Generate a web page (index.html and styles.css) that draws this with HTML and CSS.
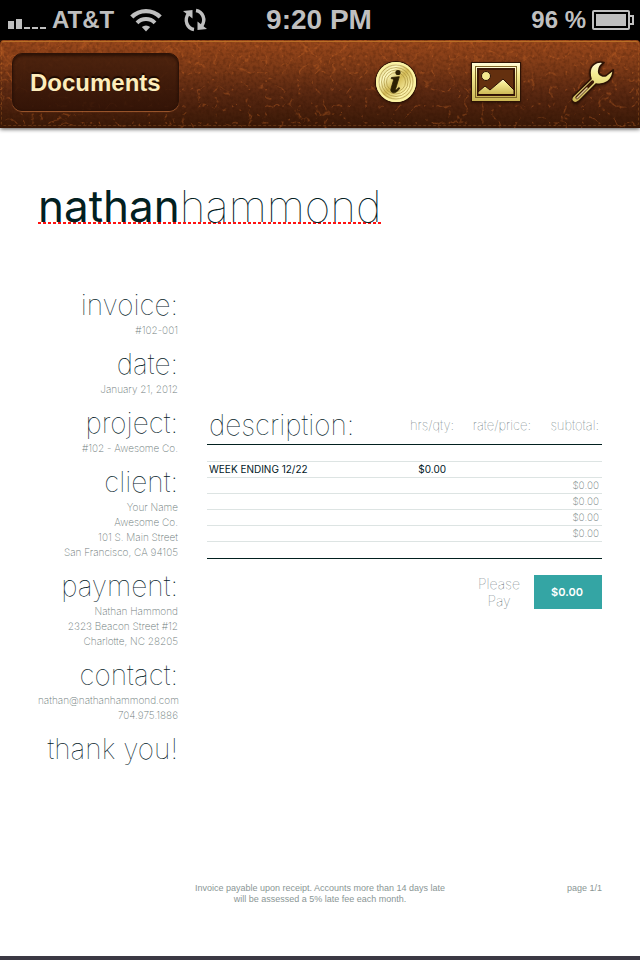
FILE: index.html
```html
<!DOCTYPE html>
<html lang="en">
<head>
<meta charset="utf-8">
<meta name="viewport" content="width=device-width, initial-scale=1">
<title>Invoice #102-001</title>
<link rel="stylesheet" href="styles.css">
</head>
<body>
<div class="status">
  <div class="status-side">
    <svg class="signal" width="40" height="12" viewBox="0 0 40 12" fill="currentColor" aria-hidden="true">
      <path d="M0 3h6v8H0zM8 1h6v10H8zM16 9h6v2h-6zM24 9h6v2h-6zM32 9h6v2h-6z"/>
    </svg>
    <span class="carrier">AT&amp;T</span>
    <svg class="wifi" width="32" height="24" viewBox="0 0 32 24" fill="none" stroke="currentColor" stroke-width="4.400" aria-hidden="true">
      <path d="M1.800 9a20 20 0 0 1 28.400 0"/>
      <path d="M7 14.800a12.700 12.700 0 0 1 18 0" stroke-width="4"/>
      <path d="M16 23.500l-4.200-4.400a6 6 0 0 1 8.400 0z" fill="currentColor" stroke="none"/>
    </svg>
    <svg class="sync" width="26" height="24" viewBox="0 0 26 24" fill="none" stroke="currentColor" stroke-width="3.400" aria-hidden="true">
      <path d="M12 21.500C5.500 20.500 1.500 12.500 6.500 5.500"/>
      <path d="M14 2.500C20.500 3.500 24.500 11.500 19.500 18.500"/>
      <path d="M1 3l9.500-1v8.500z" fill="currentColor" stroke="none"/>
      <path d="M25 21l-9.500 1v-8.500z" fill="currentColor" stroke="none"/>
    </svg>
  </div>
  <div class="clock">9:20 PM</div>
  <div class="status-side status-end">
    <span class="percent">96 %</span>
    <svg class="battery" width="42" height="20" viewBox="0 0 42 20" aria-hidden="true">
      <rect x="1" y="1" width="36" height="18" rx="1" fill="none" stroke="currentColor" stroke-width="2"/>
      <rect x="4" y="4" width="30" height="12" fill="currentColor"/>
      <path d="M38 6h3v8h-3" fill="none" stroke="currentColor" stroke-width="2"/>
    </svg>
  </div>
</div>

<header class="toolbar">
  <svg class="leather" width="100%" height="100%" aria-hidden="true">
    <filter id="veins" x="0" y="0" width="100%" height="100%" color-interpolation-filters="sRGB">
      <feTurbulence type="turbulence" baseFrequency="0.06" numOctaves="3" seed="8"/>
      <feColorMatrix values="0 0 0 0 0.82  0 0 0 0 0.42  0 0 0 0 0.16  -9 0 0 0 1.300"/>
    </filter>
    <filter id="pores" x="0" y="0" width="100%" height="100%" color-interpolation-filters="sRGB">
      <feTurbulence type="fractalNoise" baseFrequency="0.3" numOctaves="2" seed="3"/>
      <feColorMatrix values="0 0 0 0 0.16  0 0 0 0 0.05  0 0 0 0 0  3 0 0 0 -1.200"/>
    </filter>
    <rect width="100%" height="100%" filter="url(#pores)" opacity=".2"/>
    <rect width="100%" height="100%" filter="url(#veins)" opacity=".35"/>
  </svg>
  <button class="back" type="button">Documents</button>
  <div class="tools">
    <button class="tool" type="button" aria-label="Information">
      <svg width="48" height="48" viewBox="0 0 48 48" aria-hidden="true">
        <defs>
          <linearGradient id="gold" x1="0" y1="0" x2="0" y2="1">
            <stop offset="0" stop-color="#fffbd8"/><stop offset=".3" stop-color="#f5eb92"/><stop offset="1" stop-color="#cbb654"/>
          </linearGradient>
          <linearGradient id="disc" x1="0" y1="0" x2="1" y2="1">
            <stop offset="0" stop-color="#c9b251"/><stop offset=".3" stop-color="#fffbc4"/><stop offset=".5" stop-color="#d3bb56"/><stop offset=".75" stop-color="#fff6ae"/><stop offset="1" stop-color="#b79b3c"/>
          </linearGradient>
        </defs>
        <circle cx="24" cy="24" r="21" fill="#2d1204"/>
        <circle cx="24" cy="24" r="20" fill="url(#disc)"/>
        <circle cx="24" cy="24" r="19" fill="none" stroke="#fbf3a2" stroke-width="2"/>
        <g fill="none" stroke="#a58c38" stroke-width=".8" opacity=".8">
          <circle cx="24" cy="24" r="17"/><circle cx="24" cy="24" r="14.500"/><circle cx="24" cy="24" r="12"/><circle cx="24" cy="24" r="9.500"/>
        </g>
        <circle cx="26" cy="14.500" r="2.600" fill="#2c2002"/>
        <path d="M19.500 19.500l7.800-.8-3.700 12.300c-.4 1.500.8 1.200 3.200-1.600l1 .8c-2.800 4.200-5.300 5-7.300 4.400-2-.7-2-2.400-1.300-4.600l2.200-7.400c.4-1.600-.4-1.800-2.200-1.900z" fill="#2c2002" stroke="#2c2002" stroke-width=".8"/>
      </svg>
    </button>
    <button class="tool" type="button" aria-label="Photos">
      <svg width="52" height="44" viewBox="0 0 52 44" aria-hidden="true">
        <path fill="#2d1204" d="M1 2h50v40H1z"/>
        <path fill="url(#gold)" d="M2 3h48v38H2z"/>
        <path fill="#7d6528" d="M5 6h42v32H5z"/>
        <path fill="url(#gold)" d="M6 7h40v30H6z"/>
        <path fill="#3a1707" d="M7 8h38v28H7z"/>
        <path fill="#64300f" d="M9 10h34v25H9z"/>
        <circle cx="16" cy="16" r="4.500" fill="#f3e88f" stroke="#2d1204"/>
        <path d="M8 34.500v-2.500l7-6 5 4 13-11 11 11v4.500z" fill="url(#gold)" stroke="#2d1204"/>
      </svg>
    </button>
    <button class="tool" type="button" aria-label="Settings">
      <svg width="44" height="46" viewBox="2 0 44 46" aria-hidden="true">
        <path d="M34 3.500C25.500 1.500 20 7 20 13.500c0 2.800.3 4.500 1 6.300L3.200 37c-4.400 4.200 1.300 9.300 5.600 5.200L26 25c8.500 1.500 17-3 17.200-14.200l-7 5.700c-2.800 1.500-7.800-.5-7.500-4.500.2-3.500 2.300-6.500 5.300-8.500z" fill="url(#gold)" stroke="#2d1204" stroke-width="1.600" stroke-linejoin="round"/>
        <path d="M7 38.500l15.500-15.500" stroke="#3c1a08" stroke-width="3.200" stroke-linecap="round"/>
        <path d="M7 39l10-10" stroke="#dcc48e" stroke-width="1.600" stroke-linecap="round"/>
      </svg>
    </button>
  </div>
</header>

<main class="sheet">
  <h1 class="brand"><span class="brand-name"><strong>nathan</strong>hammond</span></h1>

  <div class="columns">
    <aside class="details">
      <h2>invoice:</h2>
      <p>#102-001</p>
      <h2>date:</h2>
      <p>January 21, 2012</p>
      <h2>project:</h2>
      <p>#102 - Awesome Co.</p>
      <h2>client:</h2>
      <p>Your Name<br>Awesome Co.<br>101 S. Main Street<br>San Francisco, CA 94105</p>
      <h2>payment:</h2>
      <p>Nathan Hammond<br>2323 Beacon Street #12<br>Charlotte, NC 28205</p>
      <h2>contact:</h2>
      <p>nathan@nathanhammond.com<br>704.975.1886</p>
      <h2>thank you!</h2>
    </aside>

    <section class="billing">
      <table class="items">
        <thead>
          <tr><th class="desc" scope="col">description:</th><th class="hrs" scope="col">hrs/qty:</th><th class="rate" scope="col">rate/price:</th><th class="sub" scope="col">subtotal:</th></tr>
        </thead>
        <tbody>
          <tr><td></td><td></td><td></td><td></td></tr>
          <tr class="filled"><td>WEEK ENDING 12/22</td><td class="qty">$0.00</td><td></td><td></td></tr>
          <tr><td></td><td></td><td></td><td>$0.00</td></tr>
          <tr><td></td><td></td><td></td><td>$0.00</td></tr>
          <tr><td></td><td></td><td></td><td>$0.00</td></tr>
          <tr><td></td><td></td><td></td><td>$0.00</td></tr>
          <tr><td></td><td></td><td></td><td></td></tr>
        </tbody>
      </table>
      <div class="total">
        <span class="total-label">Please<br>Pay</span>
        <strong class="total-value">$0.00</strong>
      </div>
    </section>
  </div>

  <footer class="foot">
    <p class="terms">Invoice payable upon receipt. Accounts more than 14 days late<br>will be assessed a 5% late fee each month.</p>
    <p class="page">page 1/1</p>
  </footer>
</main>
</body>
</html>
```

FILE: styles.css
```css
* {
  box-sizing: border-box;
}

body {
  margin: 0;
  min-height: 100vh;
  display: flex;
  flex-direction: column;
  background: #000;
  color: #02201f;
  font-family: Inter, "Liberation Sans", sans-serif;
}

h1, h2, p {
  margin: 0;
  font-weight: 100;
}

svg {
  display: block;
}

button {
  border: 0;
  padding: 0;
  background: none;
}

/* Status bar */
.status {
  display: grid;
  grid-template-columns: 1fr auto 1fr;
  align-items: center;
  height: 40px;
  padding: 0 6px 0 8px;
  background: #000;
  color: #bfbfbf;
  font: bold 24px/38px "Liberation Sans", Arial, sans-serif;
}

.status-side {
  display: flex;
  align-items: center;
}

.signal {
  margin: 8px 4px 0 0;
}

.clock {
  padding-right: 4px;
  font-size: 28px;
}

.wifi {
  margin-left: 16px;
}

.sync {
  margin-left: 20px;
}

.status-end {
  justify-content: flex-end;
  gap: 6px;
}

/* Leather toolbar */
.toolbar {
  position: relative;
  z-index: 1;
  display: flex;
  align-items: center;
  justify-content: space-between;
  height: 88px;
  padding: 0 24px 4px 12px;
  background: linear-gradient(#9a481b, #7f3b17 30%, #5a2811 60%, #381807);
  border-radius: 4px 4px 0 0;
  box-shadow: 0 1px 4px rgba(0, 0, 0, 0.7);
}

.toolbar::after {
  content: "";
  position: absolute;
  inset: 1px 1px 2px;
  border: 1px dashed rgba(220, 130, 50, 0.25);
  border-top: 1px solid #b87027;
  border-radius: 3px;
  pointer-events: none;
}

.leather {
  position: absolute;
  inset: 0;
}

.back {
  position: relative;
  height: 58px;
  padding: 2px 17px 0;
  border-radius: 10px;
  background: linear-gradient(rgba(67, 30, 12, 0.85), rgba(48, 18, 6, 0.85));
  border: 1px solid #2c1207;
  box-shadow: inset 0 2px 3px rgba(20, 6, 0, 0.6), 0 1px 1px rgba(220, 130, 70, 0.6);
  color: #fdedbc;
  font: bold 24px/28px "Liberation Sans", Arial, sans-serif;
  text-shadow: 0 -2px 1px #1d0a02;
}

.tools {
  position: relative;
  display: flex;
  align-items: center;
  gap: 50px;
}

.tool {
  filter: drop-shadow(0 1px 1px rgba(20, 6, 0, 0.6));
}

/* Invoice */
.sheet {
  flex: 1;
  display: flex;
  flex-direction: column;
  padding: 58px 38px 51px;
  background: #fff;
  border-bottom: 4px solid #3b3944;
}

.brand {
  font-size: 44px;
  line-height: 36px;
}

.brand-name {
  display: inline-block;
  padding-top: 2px;
  background: repeating-linear-gradient(90deg, #f11 0 3px, transparent 3px 5px) left bottom / 100% 2px no-repeat;
}

.brand strong {
  font-weight: 400;
}

.columns {
  display: grid;
  grid-template-columns: 140px 1fr;
  gap: 29px;
  margin-top: 55px;
}

.details {
  text-align: right;
}

.details h2 {
  padding: 11px 0 3px;
  font-size: 28px;
  line-height: 30px;
  white-space: nowrap;
}

.details p {
  color: #6f7d7c;
  font-size: 10px;
  line-height: 15px;
  font-weight: 200;
  white-space: nowrap;
}

.billing {
  padding-top: 127px;
}

.items {
  width: 100%;
  border-collapse: collapse;
  table-layout: fixed;
}

.items th {
  padding: 0 3px 0 0;
  height: 38px;
  border-bottom: 1px solid #02201f;
  color: #4c605f;
  font-size: 13px;
  font-weight: 100;
  text-align: right;
}

.items .desc {
  padding-left: 2px;
  color: #02201f;
  font-size: 28px;
  text-align: left;
}

.items .hrs,
.items .rate {
  padding-right: 0;
}

.hrs {
  width: 70px;
}

.rate {
  width: 77px;
}

.sub {
  width: 71px;
}

.items td {
  height: 16px;
  padding: 0 3px 0 2px;
  border-bottom: 1px solid #dde4e3;
  color: #6f7d7c;
  font-size: 10px;
  line-height: 15px;
  font-weight: 200;
  text-align: right;
}

.items td:first-child {
  text-align: left;
}

.items tbody tr:first-child td,
.items tbody tr:last-child td {
  height: 17px;
}

.items tbody tr:last-child td {
  border-bottom-color: #02201f;
}

.items .filled td {
  color: #02201f;
  font-weight: 400;
}

.items .filled .qty {
  padding-right: 8px;
}

.total {
  display: flex;
  justify-content: flex-end;
  align-items: center;
  gap: 14px;
  margin-top: 16px;
}

.total-label {
  color: #4c605f;
  font-size: 14px;
  line-height: 17px;
  font-weight: 100;
  text-align: center;
}

.total-value {
  width: 68px;
  padding-right: 2px;
  background: #34a5a4;
  color: #fff;
  font-size: 11px;
  line-height: 34px;
  font-weight: 600;
  text-align: center;
}

.foot {
  display: grid;
  grid-template-columns: 1fr auto 1fr;
  margin-top: auto;
  color: #8a9695;
  font-family: "Liberation Sans", Arial, sans-serif;
  font-size: 9px;
  line-height: 11px;
}

.foot p {
  font-weight: 400;
}

.terms {
  grid-column: 2;
  text-align: center;
}

.page {
  text-align: right;
}
```
